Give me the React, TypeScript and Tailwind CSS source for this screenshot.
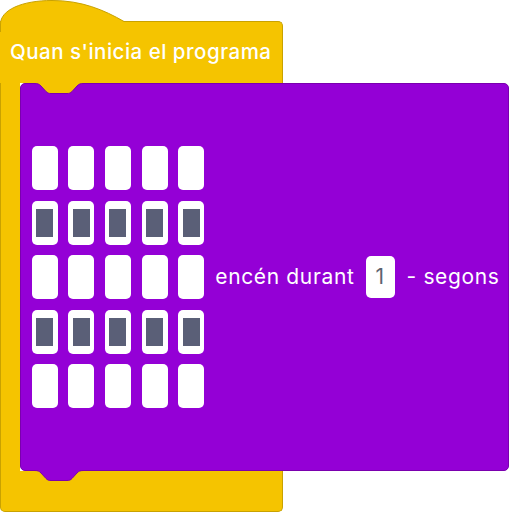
const YELLOW = "#f5c400";

const rows = [false, true, false, true, false];

function Cell({ lit }: { lit: boolean }) {
  return (
    <div className="flex h-[44px] w-[26px] items-center justify-center rounded-[5px] bg-white">
      {lit ? <div className="h-[28px] w-[17px] bg-[#5a5f77]" /> : null}
    </div>
  );
}

export default function App() {
  return (
    <div
      className="relative w-[509px] bg-white pt-[21px] text-white"
      style={{ fontFamily: "Inter, 'Noto Sans', sans-serif" }}
    >
      {/* hat curve */}
      <svg
        className="absolute left-0 top-0"
        width="130"
        height="32"
        viewBox="0 0 130 32"
      >
        <path
          d="M0.5 32 V24 C0.5 10 22 0.5 52 0.5 C82 0.5 104 10 124 21.5 H130 V32 Z"
          fill={YELLOW}
        />
        <path
          d="M0.5 32 V24 C0.5 10 22 0.5 52 0.5 C82 0.5 104 10 124 21.5 H130"
          fill="none"
          stroke="#c9a200"
          strokeWidth="1"
        />
      </svg>

      {/* header */}
      <div className="flex h-[62px] w-[283px] items-center rounded-tr-[5px] border-r border-t border-[#c9a200] bg-[#f5c400] pl-[10px] text-[20.5px] font-medium tracking-[0.5px]">
        <span className="relative">Quan s'inicia el programa</span>
      </div>

      {/* body */}
      <div className="flex h-[388px]">
        <div className="w-[20px] border-l border-[#c9a200] bg-[#f5c400]" />
        <div className="relative flex flex-1 items-center rounded-[5px] border border-[#7a00ae] bg-[#9400d6] pl-[10.5px]">
          <svg
            className="absolute left-[13px] top-[-1px]"
            width="50"
            height="12"
            viewBox="0 0 50 12"
          >
            <path
              d="M0 0 V0.5 C4 0.5 5 1 7 3 L12 8.5 C13.5 10 14.5 10.5 17 10.5 H33 C35.5 10.5 36.5 10 38 8.5 L43 3 C45 1 46 0.5 50 0.5 V0 Z"
              fill={YELLOW}
            />
            <path
              d="M0 0.5 C4 0.5 5 1 7 3 L12 8.5 C13.5 10 14.5 10.5 17 10.5 H33 C35.5 10.5 36.5 10 38 8.5 L43 3 C45 1 46 0.5 50 0.5"
              fill="none"
              stroke="#7a00ae"
              strokeWidth="1"
            />
          </svg>

          <div className="grid grid-cols-[repeat(5,26px)] gap-x-[10.7px] gap-y-[10.5px]">
            {rows.map((lit, r) =>
              [0, 1, 2, 3, 4].map((c) => <Cell key={`${r}-${c}`} lit={lit} />)
            )}
          </div>

          <div className="ml-[11px] flex items-center text-[21px] tracking-[0.65px]">
            <span>encén durant</span>
            <div className="ml-[11px] flex h-[42px] w-[29px] items-center justify-center rounded-[5px] bg-white text-[#5d6370]">
              1
            </div>
            <span className="ml-[12px]">- segons</span>
          </div>

          <svg
            className="absolute bottom-[-12px] left-[13px]"
            width="50"
            height="12"
            viewBox="0 0 50 12"
          >
            <path
              d="M0 0 V0.5 C4 0.5 5 1 7 3 L12 8.5 C13.5 10 14.5 10.5 17 10.5 H33 C35.5 10.5 36.5 10 38 8.5 L43 3 C45 1 46 0.5 50 0.5 V0 Z"
              fill="#9400d6"
            />
            <path
              d="M0 0.5 C4 0.5 5 1 7 3 L12 8.5 C13.5 10 14.5 10.5 17 10.5 H33 C35.5 10.5 36.5 10 38 8.5 L43 3 C45 1 46 0.5 50 0.5"
              fill="none"
              stroke="#7a00ae"
              strokeWidth="1"
            />
          </svg>
        </div>
      </div>

      {/* footer */}
      <div className="h-[41px] w-[283px] rounded-b-[5px] border-b border-l border-r border-[#c9a200] bg-[#f5c400]" />
    </div>
  );
}
